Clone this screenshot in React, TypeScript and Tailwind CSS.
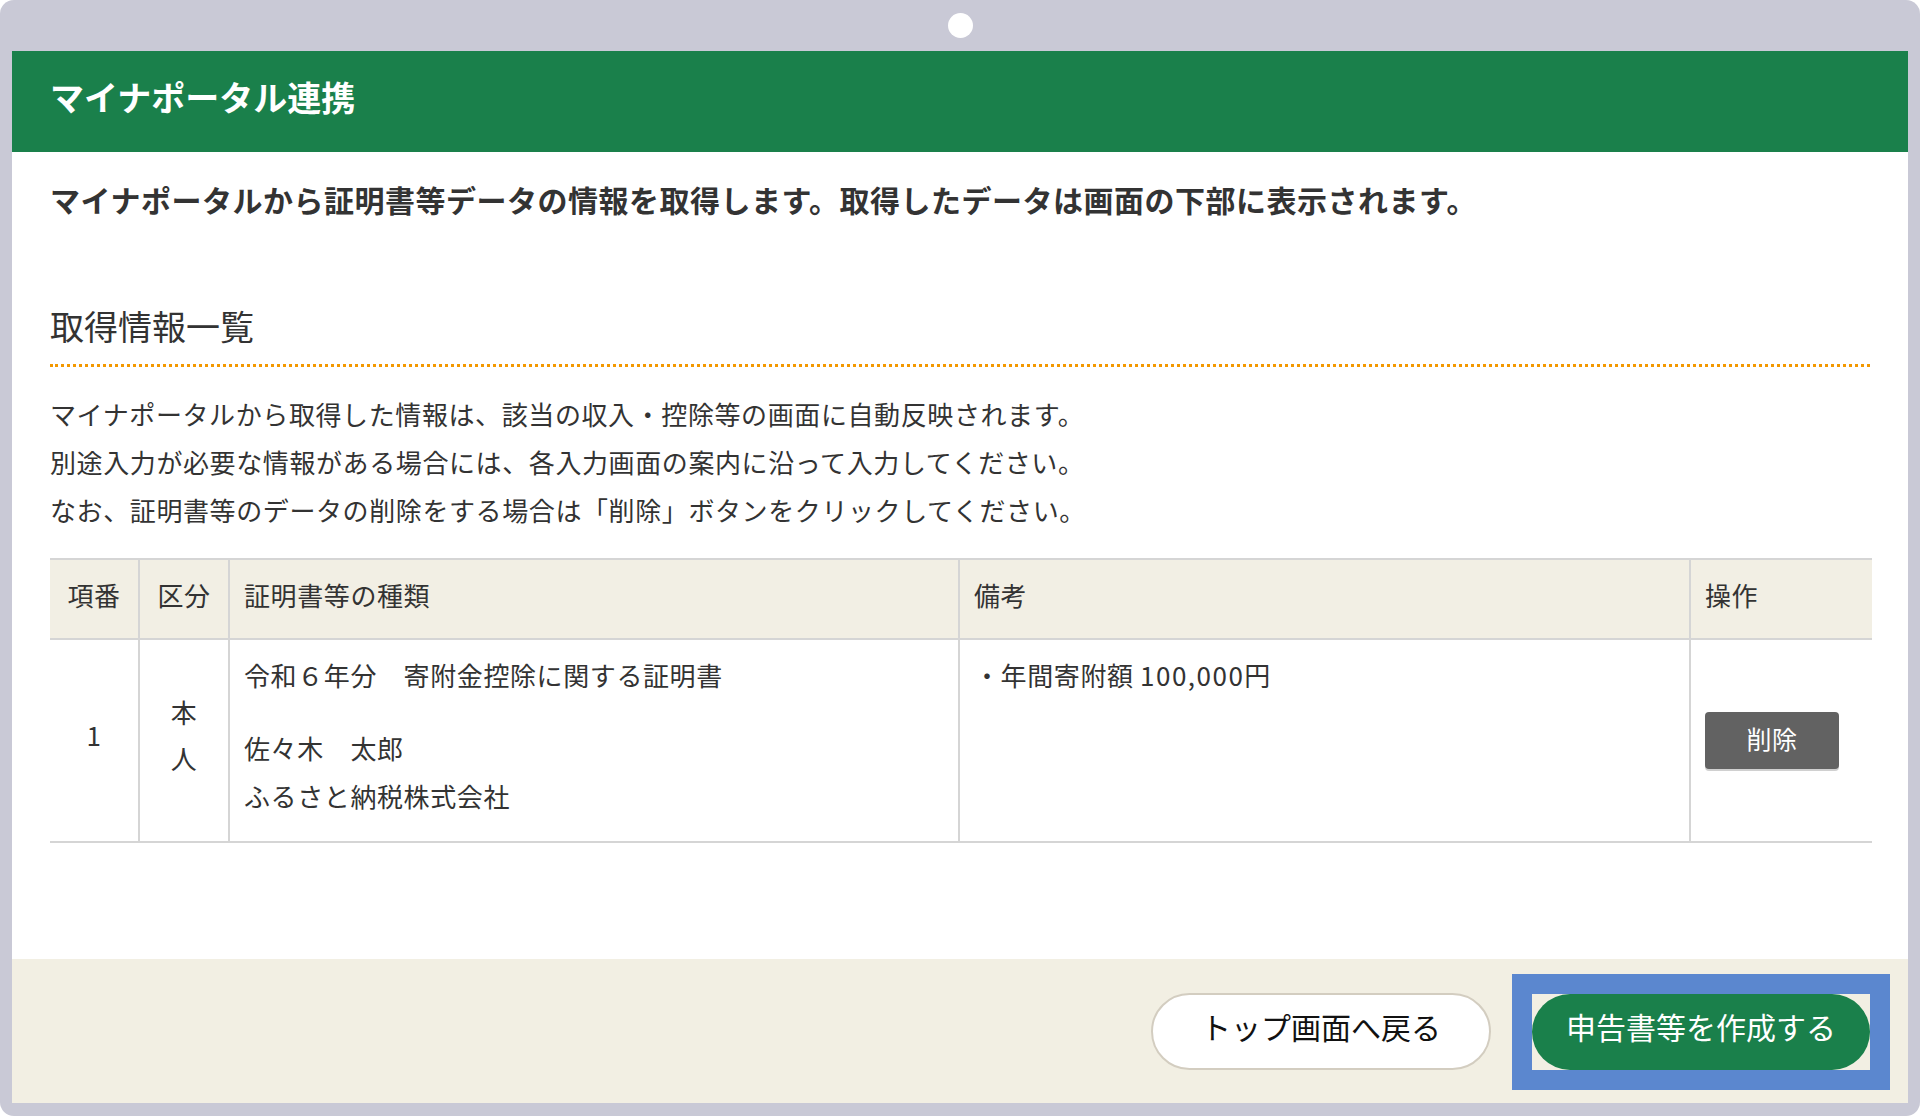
export default function App() {
  const font = { fontFamily: '"Noto Sans CJK JP", "Noto Sans", sans-serif' }

  return (
    <div className="w-[1920px] h-[1116px] bg-white" style={font}>
      <div className="w-full h-full rounded-[14px] bg-[#c9c9d6] flex flex-col px-[12px] pb-[13px]">
        <div className="h-[51px] flex items-center justify-center">
          <div className="w-[25px] h-[25px] rounded-full bg-white" />
        </div>

        <div className="flex-1 bg-white flex flex-col">
          <div className="h-[101px] bg-[#1a804b] flex items-center px-[38px] pb-[10px]">
            <h1 className="text-[34px] font-bold text-white leading-none">マイナポータル連携</h1>
          </div>

          <div className="flex-1 px-[38px] text-[#333]">
            <p className="mt-[27px] text-[30px] leading-[40px] font-bold tracking-[0.5px]">
              マイナポータルから証明書等データの情報を取得します。取得したデータは画面の下部に表示されます。
            </p>

            <h2 className="mt-[85px] text-[34px] leading-[44px] pb-[16px] border-b-[3px] border-dotted border-[#f39800]">
              取得情報一覧
            </h2>

            <div className="mt-[23px] text-[26px] leading-[48px] tracking-[0.6px]">
              <p>マイナポータルから取得した情報は、該当の収入・控除等の画面に自動反映されます。</p>
              <p>別途入力が必要な情報がある場合には、各入力画面の案内に沿って入力してください。</p>
              <p>なお、証明書等のデータの削除をする場合は「削除」ボタンをクリックしてください。</p>
            </div>

            <table className="mt-[24px] w-[1822px] border-collapse text-[26px] leading-[48px] tracking-[0.6px]">
              <thead>
                <tr className="bg-[#f2efe4] h-[80px] border-t-2 border-b-2 border-[#d5d5d5]">
                  <th className="w-[89px] font-normal text-center pb-[8px] border-r-2 border-[#d5d5d5]">項番</th>
                  <th className="w-[90px] font-normal text-center pb-[8px] border-r-2 border-[#d5d5d5]">区分</th>
                  <th className="w-[730px] font-normal text-left pl-[14px] pb-[8px] border-r-2 border-[#d5d5d5]">証明書等の種類</th>
                  <th className="w-[731px] font-normal text-left pl-[14px] pb-[8px] border-r-2 border-[#d5d5d5]">備考</th>
                  <th className="font-normal text-left pl-[14px] pb-[8px]">操作</th>
                </tr>
              </thead>
              <tbody>
                <tr className="h-[202px] border-b-2 border-[#d5d5d5]">
                  <td className="text-center align-middle pb-[12px] border-r-2 border-[#d5d5d5]">1</td>
                  <td className="text-center align-middle pb-[10px] border-r-2 border-[#d5d5d5]">
                    <span className="inline-block w-[28px] break-all leading-[46px]">本人</span>
                  </td>
                  <td className="align-top pl-[14px] pt-[11px] pb-[21px] border-r-2 border-[#d5d5d5]">
                    <div className="mb-[25px]">令和６年分　寄附金控除に関する証明書</div>
                    <div>佐々木　太郎</div>
                    <div>ふるさと納税株式会社</div>
                  </td>
                  <td className="align-top pl-[14px] pt-[11px] border-r-2 border-[#d5d5d5]">
                    ・年間寄附額 <span className="tracking-[1.5px]">100,000</span>円
                  </td>
                  <td className="align-middle pl-[14px]">
                    <button className="w-[134px] h-[57px] rounded-[4px] bg-[#626262] text-white text-[25px] leading-none pb-[4px] shadow-[0_2px_0_#d0d0d0]">
                      削除
                    </button>
                  </td>
                </tr>
              </tbody>
            </table>
          </div>

          <div className="h-[144px] bg-[#f2efe3] flex items-center justify-end pr-[18px] pt-[1px]">
            <button className="w-[340px] h-[77px] rounded-full bg-white border-2 border-[#d3cdc0] text-[30px] text-[#111] leading-none pb-[12px]">
              トップ画面へ戻る
            </button>
            <div className="ml-[21px] border-[20px] border-[#5b87cf] bg-[#f2efe3]">
              <button className="w-[338px] h-[76px] rounded-full bg-[#1a804b] text-white text-[30px] leading-none pb-[12px] block">
                申告書等を作成する
              </button>
            </div>
          </div>
        </div>
      </div>
    </div>
  )
}
